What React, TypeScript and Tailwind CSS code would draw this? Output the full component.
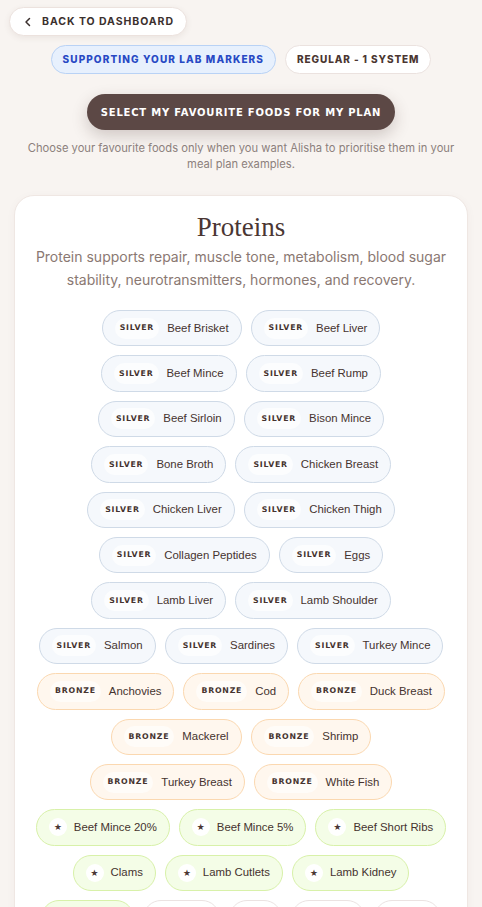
import React from "react";

type Tier = "silver" | "bronze" | "fav" | "plain";

const rows: { tier: Tier; name: string }[][] = [
  [{ tier: "silver", name: "Beef Brisket" }, { tier: "silver", name: "Beef Liver" }],
  [{ tier: "silver", name: "Beef Mince" }, { tier: "silver", name: "Beef Rump" }],
  [{ tier: "silver", name: "Beef Sirloin" }, { tier: "silver", name: "Bison Mince" }],
  [{ tier: "silver", name: "Bone Broth" }, { tier: "silver", name: "Chicken Breast" }],
  [{ tier: "silver", name: "Chicken Liver" }, { tier: "silver", name: "Chicken Thigh" }],
  [{ tier: "silver", name: "Collagen Peptides" }, { tier: "silver", name: "Eggs" }],
  [{ tier: "silver", name: "Lamb Liver" }, { tier: "silver", name: "Lamb Shoulder" }],
  [
    { tier: "silver", name: "Salmon" },
    { tier: "silver", name: "Sardines" },
    { tier: "silver", name: "Turkey Mince" },
  ],
  [
    { tier: "bronze", name: "Anchovies" },
    { tier: "bronze", name: "Cod" },
    { tier: "bronze", name: "Duck Breast" },
  ],
  [{ tier: "bronze", name: "Mackerel" }, { tier: "bronze", name: "Shrimp" }],
  [{ tier: "bronze", name: "Turkey Breast" }, { tier: "bronze", name: "White Fish" }],
  [
    { tier: "fav", name: "Beef Mince 20%" },
    { tier: "fav", name: "Beef Mince 5%" },
    { tier: "fav", name: "Beef Short Ribs" },
  ],
  [
    { tier: "fav", name: "Clams" },
    { tier: "fav", name: "Lamb Cutlets" },
    { tier: "fav", name: "Lamb Kidney" },
  ],
  [
    { tier: "fav", name: "Mussels" },
    { tier: "plain", name: "Pork Belly" },
    { tier: "plain", name: "Quail" },
    { tier: "plain", name: "Pork Loin" },
    { tier: "plain", name: "Tempeh" },
  ],
];

const chipStyles: Record<Tier, string> = {
  silver: "bg-[#f5f8fc] border-[#cfdae7] gap-[8px]",
  bronze: "bg-[#fff7ee] border-[#fbd8b0] gap-[8px]",
  fav: "bg-[#f4fde7] border-[#d8f1a9] gap-[7px]",
  plain: "bg-white border-[#ebe3e2] gap-[8px]",
};

const badgeStyles: Record<Tier, string> = {
  silver: "bg-[#fcfdfe]",
  bronze: "bg-[#fffcf8]",
  fav: "bg-white",
  plain: "bg-white",
};

function Chip({ tier, name }: { tier: Tier; name: string }) {
  return (
    <button
      className={`flex h-[36.4px] shrink-0 items-center whitespace-nowrap rounded-full border pl-[12px] pr-[12px] ${chipStyles[tier]}`}
    >
      {tier === "fav" ? (
        <span className="flex h-[18px] w-[18px] items-center justify-center rounded-full bg-white text-[8px] leading-none text-[#4a3633]">
          ★
        </span>
      ) : tier === "plain" ? null : (
        <span
          className={`flex h-[21px] items-center rounded-full px-[5px] text-[7.8px] font-bold uppercase tracking-[0.1em] text-[#45332f] ${badgeStyles[tier]}`}
          style={{ fontFamily: '"DejaVu Sans", sans-serif' }}
        >
          {tier}
        </span>
      )}
      <span
        className="text-[11.4px] text-[#45332f]"
        style={{ fontFamily: '"Liberation Sans", Arial, sans-serif' }}
      >
        {name}
      </span>
    </button>
  );
}

function ChevronLeft() {
  return (
    <svg width="8" height="10" viewBox="0 0 8 10" fill="none">
      <path d="M5.5 1.5 2 5l3.5 3.5" stroke="#3b302e" strokeWidth="1.5" strokeLinecap="round" strokeLinejoin="round" />
    </svg>
  );
}

export default function App() {
  return (
    <div
      className="h-[907px] w-full overflow-hidden bg-[#f8f4f1]"
      style={{ fontFamily: 'Inter, "Open Sans", sans-serif' }}
    >
      <div className="px-[9px] pt-[7px]">
        <button className="flex h-[29px] items-center gap-[10px] rounded-full border border-[#ece2de] bg-white pl-[14px] pr-[12px] shadow-[0_2px_6px_rgba(90,60,50,0.08)]">
          <ChevronLeft />
          <span className="text-[10.5px] font-bold uppercase tracking-[0.09em] text-[#3b302e]">
            Back to dashboard
          </span>
        </button>
      </div>

      <div className="mt-[9px] flex justify-center gap-[9px]">
        <span className="flex h-[29px] items-center rounded-full border border-[#b9d2f5] bg-[#e7f0fd] px-[11px] text-[10px] font-extrabold uppercase tracking-[0.11em] text-[#2849c4]">
          Supporting your lab markers
        </span>
        <span className="flex h-[29px] items-center rounded-full border border-[#ebe2df] bg-white px-[11px] text-[10px] font-extrabold uppercase tracking-[0.09em] text-[#4b3631]">
          Regular - 1 System
        </span>
      </div>

      <div className="mt-[20px] flex justify-center">
        <button
          className="flex h-[36px] items-center rounded-full bg-[#5c4845] px-[14px] text-[10px] font-bold uppercase tracking-[0.08em] text-white shadow-[0_6px_16px_rgba(70,45,40,0.22)]"
          style={{ fontFamily: '"DejaVu Sans", sans-serif' }}
        >
          Select my favourite foods for my plan
        </button>
      </div>

      <p className="mx-auto mt-[10px] max-w-[440px] text-center text-[11.2px] leading-[16px] text-[#8c807c]">
        Choose your favourite foods only when you want Alisha to prioritise them in your meal plan examples.
      </p>

      <section className="mx-[14px] mt-[23px] rounded-[20px] border border-[#efe7e3] bg-white px-[14px] pt-[14px] pb-8 shadow-[0_2px_10px_rgba(90,60,50,0.04)]">
        <h2
          className="text-center text-[27px] leading-[34px] text-[#4a3633]"
          style={{ fontFamily: '"Liberation Serif", "Times New Roman", serif' }}
        >
          Proteins
        </h2>
        <p className="mt-[1px] text-center text-[14px] leading-[23px] text-[#8a7872]">
          Protein supports repair, muscle tone, metabolism, blood sugar stability, neurotransmitters, hormones, and recovery.
        </p>
        <div className="mt-[19px] flex flex-col gap-[9px]">
          {rows.map((row, i) => (
            <div key={i} className="flex justify-center gap-[9px]">
              {row.map((c) => (
                <Chip key={c.name} tier={c.tier} name={c.name} />
              ))}
            </div>
          ))}
        </div>
      </section>
    </div>
  );
}
